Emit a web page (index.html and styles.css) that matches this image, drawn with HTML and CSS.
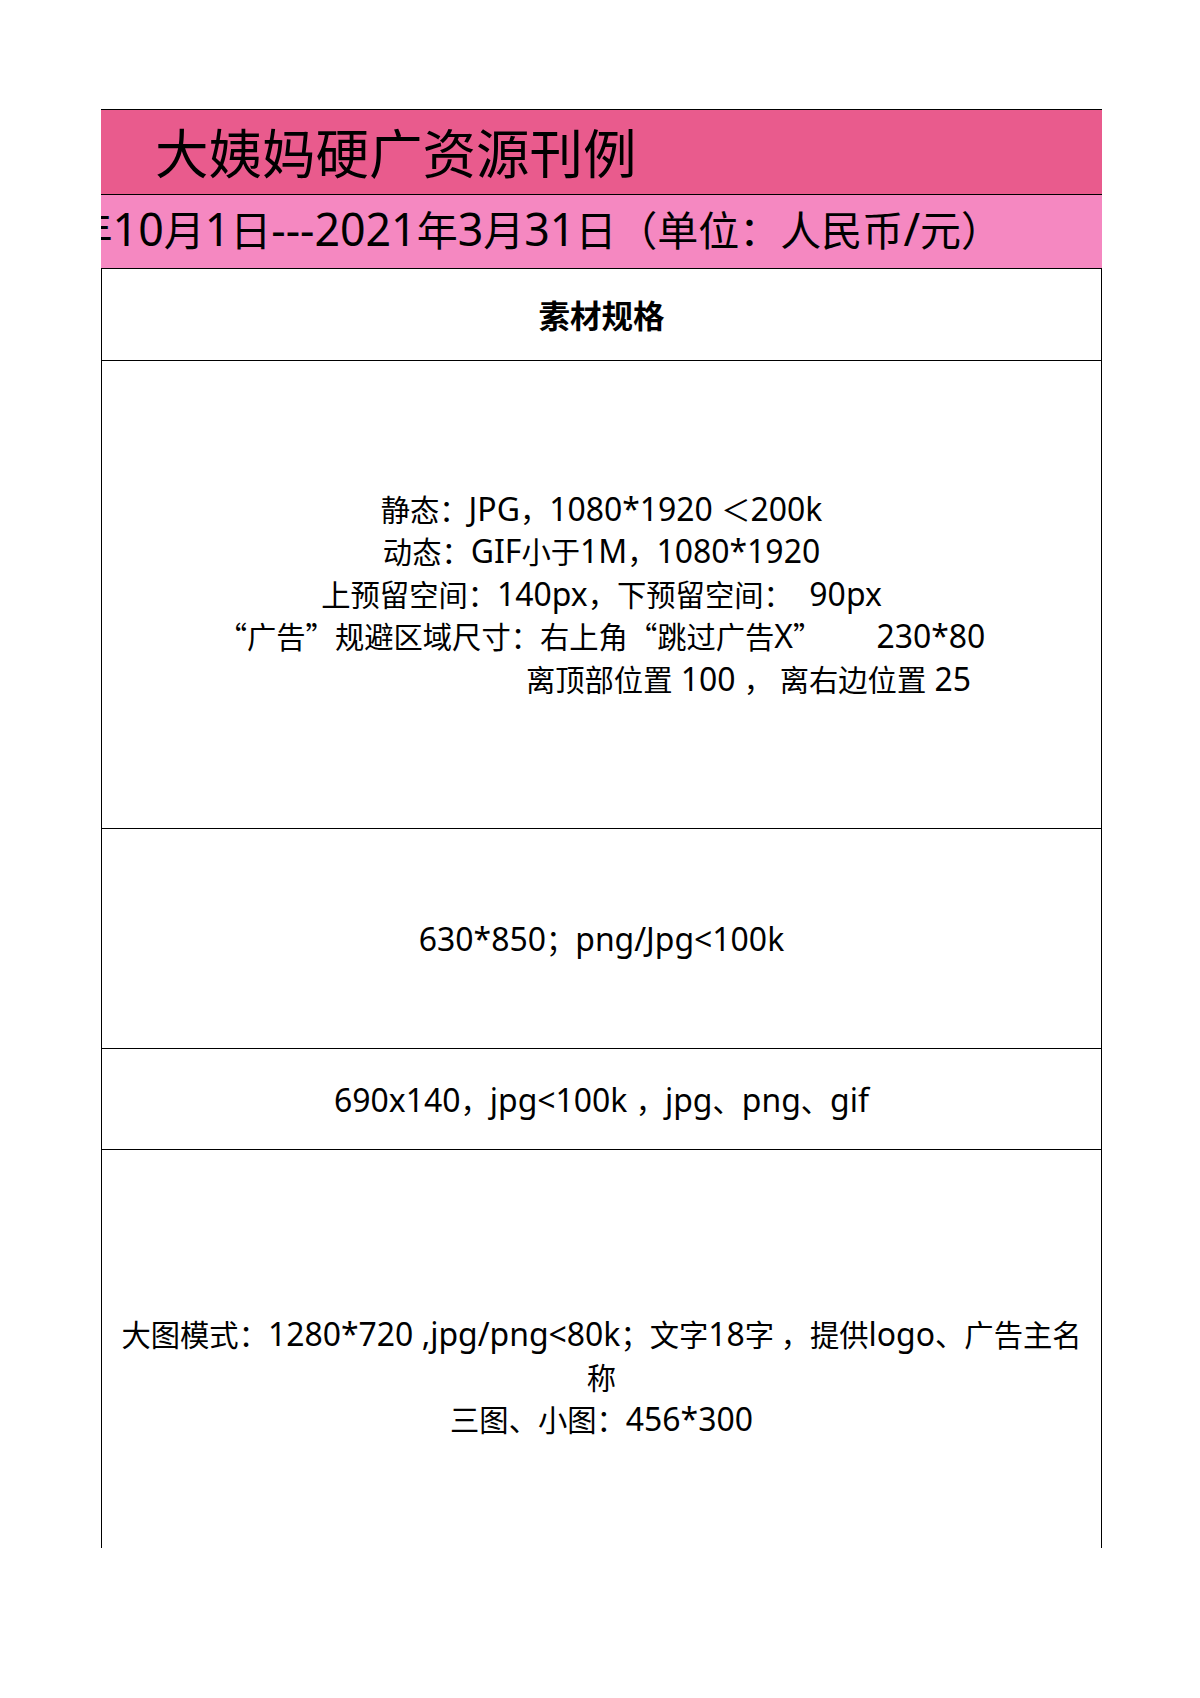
FILE: index.html
```html
<!DOCTYPE html>
<html lang="zh-CN">
<head>
<meta charset="utf-8">
<title>大姨妈硬广资源刊例</title>
<link rel="stylesheet" href="styles.css">
</head>
<body>
<div class="sheet">
  <div class="title">大姨妈硬广资源刊例</div>
  <div class="subtitle"><span class="subtitle-text"><span class="en">2020</span>年<span class="en">10</span>月<span class="en">1</span>日<span class="en">---2021</span>年<span class="en">3</span>月<span class="en">31</span>日（单位：人民币<span class="en">/</span>元）</span></div>
  <div class="table">
    <div class="row row-head">素材规格</div>
    <div class="row row-1">
      <div class="line">静态：<span class="en">JPG</span>，<span class="en">1080*1920 </span>＜<span class="en">200k</span></div>
      <div class="line">动态：<span class="en">GIF</span>小于<span class="en">1M</span>，<span class="en">1080*1920</span></div>
      <div class="line">上预留空间：<span class="en">140px</span>，下预留空间：<span class="en">  90px</span></div>
      <div class="line">“广告”规避区域尺寸：右上角“跳过广告<span class="en">X</span>”<span class="en gap">230*80</span></div>
      <div class="line indent">离顶部位置<span class="en"> 100 </span>， 离右边位置<span class="en"> 25</span></div>
    </div>
    <div class="row row-2">
      <div class="line"><span class="en">630*850</span>；<span class="en">png/Jpg&lt;100k</span></div>
    </div>
    <div class="row row-3">
      <div class="line"><span class="en">690x140</span>，<span class="en">jpg&lt;100k </span>，<span class="en">jpg</span>、<span class="en">png</span>、<span class="en">gif</span></div>
    </div>
    <div class="row row-4">
      <div class="line">大图模式：<span class="en">1280*720 ,jpg/png&lt;80k</span>；文字<span class="en">18</span>字 ，提供<span class="en">logo</span>、广告主名</div>
      <div class="line">称</div>
      <div class="line">三图、小图：<span class="en">456*300</span></div>
    </div>
  </div>
</div>
</body>
</html>
```

FILE: styles.css
```css
html, body {
  margin: 0;
  padding: 0;
  background: #ffffff;
}

body {
  font-family: "Noto Sans CJK SC", "Noto Sans", sans-serif;
  color: #000000;
}

.en {
  font-family: "Noto Sans", "Noto Sans CJK SC", sans-serif;
  font-size: 1.09em;
  line-height: 1;
}

.sheet {
  margin: 109px 0 0 101px;
  width: 1001px;
}

.title {
  box-sizing: border-box;
  height: 86px;
  background: #e95b8d;
  border-top: 1px solid #000;
  border-bottom: 1px solid #000;
  font-size: 53.5px;
  line-height: 53.5px;
  padding: 14px 0 0 54px;
  white-space: nowrap;
}

.subtitle {
  box-sizing: border-box;
  height: 73px;
  background: #f588c1;
  display: flex;
  justify-content: flex-end;
  align-items: center;
  overflow: hidden;
  padding: 0 100px 6px 0;
}

.subtitle-text {
  flex: none;
  white-space: nowrap;
  font-size: 41px;
  line-height: 44px;
}

.table {
  border-left: 1px solid #000;
  border-right: 1px solid #000;
}

.row {
  box-sizing: border-box;
  border-top: 1px solid #000;
  display: flex;
  flex-direction: column;
  justify-content: center;
  align-items: stretch;
  font-size: 29.3px;
  line-height: 42.5px;
}

.line {
  text-align: center;
  white-space: pre;
}

.row-head {
  height: 92px;
  align-items: center;
  font-weight: 700;
  font-size: 31.5px;
}

.row-1 {
  height: 468px;
  padding-bottom: 3px;
}
.row-2 { height: 220px; }
.row-3 { height: 101px; }
.row-4 {
  height: 399px;
  justify-content: flex-start;
  padding-top: 162px;
}

.gap {
  margin-left: 54px;
}

.indent {
  padding-left: 294px;
}
```
